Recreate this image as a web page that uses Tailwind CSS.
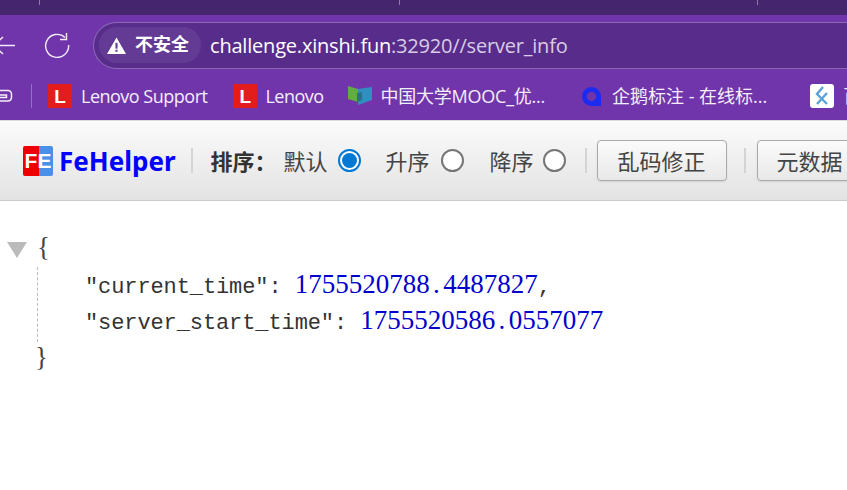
<!DOCTYPE html>
<html lang="en">
<head>
  <meta charset="UTF-8" />
  <title>FeHelper</title>
  <script src="https://cdn.jsdelivr.net/npm/@tailwindcss/browser@4"></script>
</head>
<body class="bg-white w-[847px] h-[490px] overflow-hidden font-['Inter','Noto_Sans_CJK_SC',sans-serif]">

  <!-- Tab strip -->
  <div class="h-[15px] bg-[#45256d] flex items-start">
    <div class="ml-[39px] w-px h-[5px] bg-[#8d7ba6]"></div>
    <div class="ml-[359px] w-px h-[5px] bg-[#8d7ba6]"></div>
    <div class="ml-[357px] w-px h-[5px] bg-[#8d7ba6]"></div>
  </div>

  <!-- Address bar -->
  <div class="h-[60px] bg-[#7035ab] flex items-center overflow-hidden">
    <svg class="ml-[-8px] w-[24px] h-[24px] shrink-0" viewBox="0 0 24 24" fill="none" stroke="#f3ecf8" stroke-width="1.4">
      <path d="M23 12.5H2M11 4l-9 8.5 9 8.5" />
    </svg>
    <svg class="ml-[28px] w-[26px] h-[26px] shrink-0" viewBox="0 0 26 26" fill="none" stroke="#f3ecf8" stroke-width="1.4">
      <path d="M21 5.5A11.5 11.5 0 1 0 24.6 13" />
      <path d="M22.5 1v6.5H16" />
    </svg>
    <div class="ml-[23px] w-[760px] shrink-0 h-[47px] rounded-l-[24px] bg-[#582c8b] border border-r-0 border-[#8a69b4] flex items-center pl-[5px]">
      <div class="h-[36px] w-[102px] rounded-[18px] bg-[#643b94] flex items-center pl-[8px] gap-[9px]">
        <svg class="w-[19px] h-[17px] shrink-0" viewBox="0 0 18 16">
          <path fill="#ffffff" d="M9 0.5 18 16H0Z" />
          <rect x="8" y="5.5" width="2" height="5.5" fill="#643b94" />
          <rect x="8" y="12" width="2" height="2" fill="#643b94" />
        </svg>
        <span class="text-[18px] leading-none font-bold text-white whitespace-nowrap">不安全</span>
      </div>
      <span class="ml-[9px] mt-[1px] text-[20px] text-white whitespace-nowrap font-['Open_Sans',sans-serif] tracking-[-0.2px]">challenge.xinshi.fun<span class="text-[#d8cde4]">:32920//server_info</span></span>
    </div>
  </div>

  <!-- Bookmarks -->
  <div class="h-[45px] pb-[3px] bg-[#7035ab] flex items-center text-[18px] text-[#f4eef9] whitespace-nowrap overflow-hidden font-['Open_Sans','Noto_Sans_CJK_SC',sans-serif]">
    <svg class="ml-[-3px] w-[16px] h-[16px] shrink-0" viewBox="0 0 16 16" fill="none" stroke="#f4eef9" stroke-width="1.5">
      <path d="M1 2.5h10a3.5 3.5 0 0 1 3.5 3.5v3.5a3.5 3.5 0 0 1-3.5 3.5H1" />
      <path d="M1 7h8.5v2.5H1" />
    </svg>
    <div class="ml-[18px] w-px h-[24px] bg-[#9273bd] shrink-0"></div>
    <div class="ml-[16px] w-[24px] h-[24px] bg-[#e31c1c] shrink-0 flex items-center justify-center text-white font-bold text-[19px] leading-none font-['Liberation_Sans']">L</div>
    <span class="ml-[9px] tracking-[-0.5px]">Lenovo Support</span>
    <div class="ml-[26px] w-[24px] h-[24px] bg-[#e31c1c] shrink-0 flex items-center justify-center text-white font-bold text-[19px] leading-none font-['Liberation_Sans']">L</div>
    <span class="ml-[8px] tracking-[-0.5px]">Lenovo</span>
    <svg class="ml-[24px] w-[24px] h-[20px] shrink-0" viewBox="0 0 24 20">
      <path fill="#62ad3f" d="M0 0l10 3v13L0 13Z" />
      <path fill="#2f8fc0" d="M10 3 24 1v13l-14 5Z" />
      <path fill="#28718a" d="M9 7l5-1v8l-5 2Z" />
    </svg>
    <span class="ml-[9px] tracking-[-0.25px]">中国大学MOOC_优...</span>
    <svg class="ml-[37px] w-[19px] h-[19px] shrink-0" viewBox="0 0 20 20">
      <path fill="#1b2bf0" fill-rule="evenodd" d="M10 0a10 10 0 0 1 10 10v10H10A10 10 0 0 1 10 0Zm0 5a5 5 0 1 0 0 10 5 5 0 0 0 0-10Z" />
    </svg>
    <span class="ml-[11px]">企鹅标注 - 在线标...</span>
    <div class="ml-[43px] w-[24px] h-[24px] rounded-[3px] bg-white shrink-0 flex items-center justify-center">
      <svg class="w-[16px] h-[20px]" viewBox="0 0 16 20" fill="none" stroke="#5aa2d8" stroke-width="2.4">
        <path d="M9 1 3 8l10 10M13 7 3 18" />
      </svg>
    </div>
    <span class="ml-[9px]">百</span>
  </div>

  <!-- FeHelper toolbar -->
  <div class="h-[81px] bg-gradient-to-b from-[#fbfbfb] to-[#e3e3e3] border-t border-b border-t-[#dcdcdc] border-b-[#cccccc] flex items-center whitespace-nowrap overflow-hidden text-[22px] text-[#444444] font-['Noto_Sans_CJK_SC',sans-serif]">
    <div class="ml-[23px] w-[30px] h-[30px] rounded-[2px] shrink-0 bg-gradient-to-r from-[#ee0000] from-55% to-[#4a90e8] to-55% flex items-center justify-center text-white font-bold text-[21px] leading-none font-['Liberation_Sans']">FE</div>
    <span class="ml-[6px] text-[26px] leading-none font-bold text-[#0000ff] font-['Noto_Sans',sans-serif]">FeHelper</span>
    <div class="ml-[15px] w-[2px] h-[25px] bg-[#d4d4d4] shrink-0"></div>
    <span class="ml-[18px] font-bold text-[#333333]">排序：</span>
    <span class="ml-[7px]">默认</span>
    <span class="ml-[10px] w-[23px] h-[23px] rounded-full border-[2px] border-[#0078d4] bg-white shrink-0 flex items-center justify-center"><span class="w-[15px] h-[15px] rounded-full bg-[#0078d4]"></span></span>
    <span class="ml-[25px]">升序</span>
    <span class="ml-[11px] w-[23px] h-[23px] rounded-full border-[2px] border-[#767676] bg-white shrink-0"></span>
    <span class="ml-[26px]">降序</span>
    <span class="ml-[9px] w-[23px] h-[23px] rounded-full border-[2px] border-[#767676] bg-white shrink-0"></span>
    <div class="ml-[19px] w-[2px] h-[25px] bg-[#d4d4d4] shrink-0"></div>
    <button class="ml-[10px] w-[130px] h-[41px] shrink-0 rounded-[4px] border border-[#aaaaaa] bg-gradient-to-b from-[#fbfbfb] to-[#e8e8e8] shadow-[0_1px_2px_rgba(0,0,0,0.1)] text-[#444444]">乱码修正</button>
    <div class="ml-[17px] w-[2px] h-[25px] bg-[#d4d4d4] shrink-0"></div>
    <button class="ml-[11px] w-[130px] h-[41px] shrink-0 rounded-[4px] border border-[#aaaaaa] bg-gradient-to-b from-[#fbfbfb] to-[#e8e8e8] shadow-[0_1px_2px_rgba(0,0,0,0.1)] text-[#444444] text-left pl-[19px]">元数据</button>
  </div>

  <!-- JSON output -->
  <div class="relative pt-[30px] pl-[37px] text-[22px] leading-[36px] text-[#444444] font-['Liberation_Mono',monospace]">
    <span class="absolute left-[7px] top-[41px] w-0 h-0 border-l-[10px] border-r-[10px] border-t-[16px] border-l-transparent border-r-transparent border-t-[#bbbbbb]"></span>
    <div class="h-[36px] text-[27px] leading-none pt-[3px] font-['Liberation_Serif',serif]">{</div>
    <div class="border-l border-dashed border-[#bbbbbb] pl-[47px] pt-[3px] text-[#333333]">
      <div class="h-[36px] tracking-[-0.1px]">"current_time": <span class="text-[27px] leading-none tracking-normal text-[#0000cc] font-['Liberation_Serif',serif]">1755520788<span class="inline-block w-[13.5px] text-center">.</span>4487827</span>,</div>
      <div class="h-[36px] tracking-[-0.1px]">"server_start_time": <span class="text-[27px] leading-none tracking-normal text-[#0000cc] font-['Liberation_Serif',serif]">1755520586<span class="inline-block w-[13.5px] text-center">.</span>0557077</span></div>
    </div>
    <div class="ml-[-2px] h-[36px] pt-[2px] text-[27px] leading-none font-['Liberation_Serif',serif]">}</div>
  </div>

</body>
</html>
